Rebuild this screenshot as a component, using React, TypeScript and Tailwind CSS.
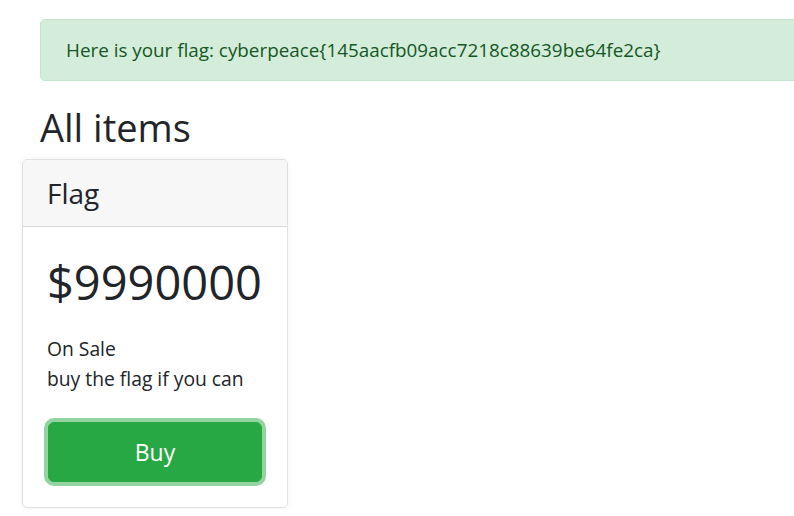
export default function App() {
  return (
    <div
      className="w-[794px] h-[516px] overflow-hidden bg-white text-[#212529] text-[20px] leading-[1.5]"
      style={{ fontFamily: '"Open Sans", "Noto Sans", sans-serif' }}
    >
      <div className="pt-[19px] pl-[40px]">
        <div className="w-[900px] h-[62px] rounded-[5px] border border-[#c3e6cb] bg-[#d4edda] text-[#155724] px-[25px] flex items-center text-[18.85px]">
          Here is your flag: cyberpeace{"{"}145aacfb09acc7218c88639be64fe2ca{"}"}
        </div>
        <h2 className="mt-[22px] text-[38px] leading-[48px] font-normal">All items</h2>
      </div>

      <div className="ml-[22px] mt-[8px] w-[266px] h-[349px] rounded-[5px] border border-black/[.125] shadow-[0_0_6px_rgba(0,0,0,0.05)] flex flex-col overflow-hidden">
        <div className="h-[67px] shrink-0 bg-[#f7f7f7] border-b border-black/[.125] px-[24px] flex items-center">
          <h4 className="text-[28px] leading-[36px] font-normal">Flag</h4>
        </div>
        <div className="px-[25px] pt-[25px] flex flex-col">
          <h1 className="-ml-[1px] text-[47px] leading-[60px] font-normal">$9990000</h1>
          <p className="-ml-[1px] mt-[22px] text-[19.3px] leading-[30px]">
            On Sale
            <br />
            buy the flag if you can
          </p>
          <button className="mt-[28px] h-[60px] w-full rounded-[6px] bg-[#28a745] border border-[#28a745] text-white text-[23px] shadow-[0_0_0_4px_rgba(40,167,69,0.5)]">
            Buy
          </button>
        </div>
      </div>
    </div>
  );
}
